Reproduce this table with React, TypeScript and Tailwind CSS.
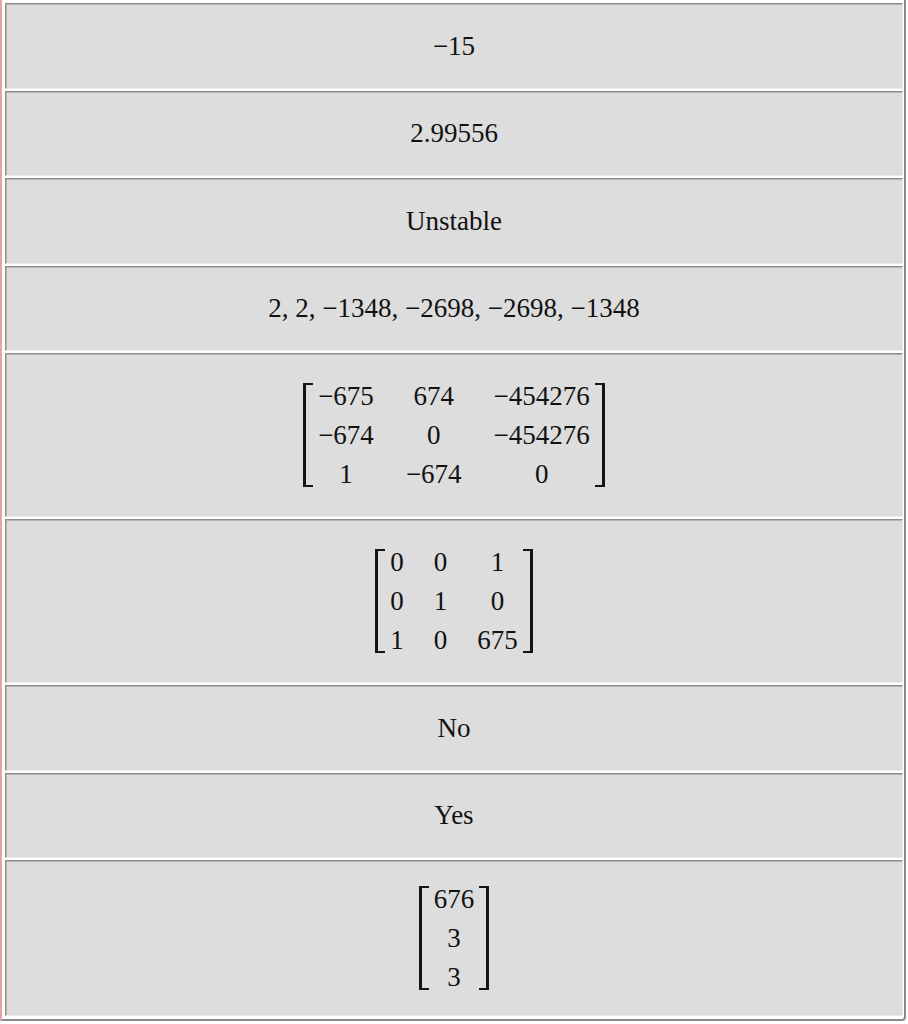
import type { ReactNode } from "react";

const serif = { fontFamily: '"Liberation Serif", "Times New Roman", serif' };

type Row =
  | { kind: "text"; value: string }
  | { kind: "matrix"; cells: string[][]; gap: string; height: string };

const rows: Row[] = [
  { kind: "text", value: "−15" },
  { kind: "text", value: "2.99556" },
  { kind: "text", value: "Unstable" },
  { kind: "text", value: "2, 2, −1348, −2698, −2698, −1348" },
  {
    kind: "matrix",
    gap: "gap-x-[32px]",
    height: "h-[164px]",
    cells: [
      ["−675", "674", "−454276"],
      ["−674", "0", "−454276"],
      ["1", "−674", "0"],
    ],
  },
  {
    kind: "matrix",
    gap: "gap-x-[30px]",
    height: "h-[164px]",
    cells: [
      ["0", "0", "1"],
      ["0", "1", "0"],
      ["1", "0", "675"],
    ],
  },
  { kind: "text", value: "No" },
  { kind: "text", value: "Yes" },
  {
    kind: "matrix",
    gap: "gap-x-0",
    height: "h-[156px]",
    cells: [["676"], ["3"], ["3"]],
  },
];

// square bracket drawn with borders: thick upright, thin hooks
function Bracket({ side }: { side: "left" | "right" }) {
  return (
    <div
      className={
        side === "left"
          ? "w-[10px] h-[104px] border-l-[3px] border-t-2 border-b-2 border-[#141414]"
          : "w-[10px] h-[104px] border-r-[3px] border-t-2 border-b-2 border-[#141414]"
      }
    />
  );
}

function Matrix({ cells, gap }: { cells: string[][]; gap: string }) {
  const cols = cells[0].length;
  const gridCols = cols === 3 ? "grid-cols-[auto_auto_auto]" : "grid-cols-[auto]";
  return (
    <div className="flex items-center">
      <Bracket side="left" />
      <div className={`grid ${gridCols} ${gap} px-[5px] leading-[39px]`}>
        {cells.flat().map((c, i) => (
          <div key={i} className="text-center">
            {c}
          </div>
        ))}
      </div>
      <Bracket side="right" />
    </div>
  );
}

function Cell({ children, height }: { children: ReactNode; height: string }) {
  return (
    <div
      className={`${height} flex items-center justify-center bg-[#dddddd] border-t border-l border-[#8c8c8c] border-b border-r border-b-[#ececec] border-r-[#ececec] shadow-[inset_1px_1px_0_#b4b4b4]`}
    >
      {children}
    </div>
  );
}

export default function App() {
  return (
    <div className="w-[908px] h-[1024px] bg-white overflow-hidden" style={serif}>
      <div className="w-[906px] flex flex-col gap-[2px] pt-[3px] pb-[3px] pl-[3px] pr-[1px] border-l-2 border-l-[#e3a6a6] border-r-2 border-b-2 border-r-[#8a8a8a] border-b-[#8a8a8a] rounded-br-[4px] text-[27px] text-[#111]">
        {rows.map((r, i) =>
          r.kind === "text" ? (
            <Cell key={i} height="h-[85.5px]">
              <span>{r.value}</span>
            </Cell>
          ) : (
            <Cell key={i} height={r.height}>
              <Matrix cells={r.cells} gap={r.gap} />
            </Cell>
          )
        )}
      </div>
    </div>
  );
}
